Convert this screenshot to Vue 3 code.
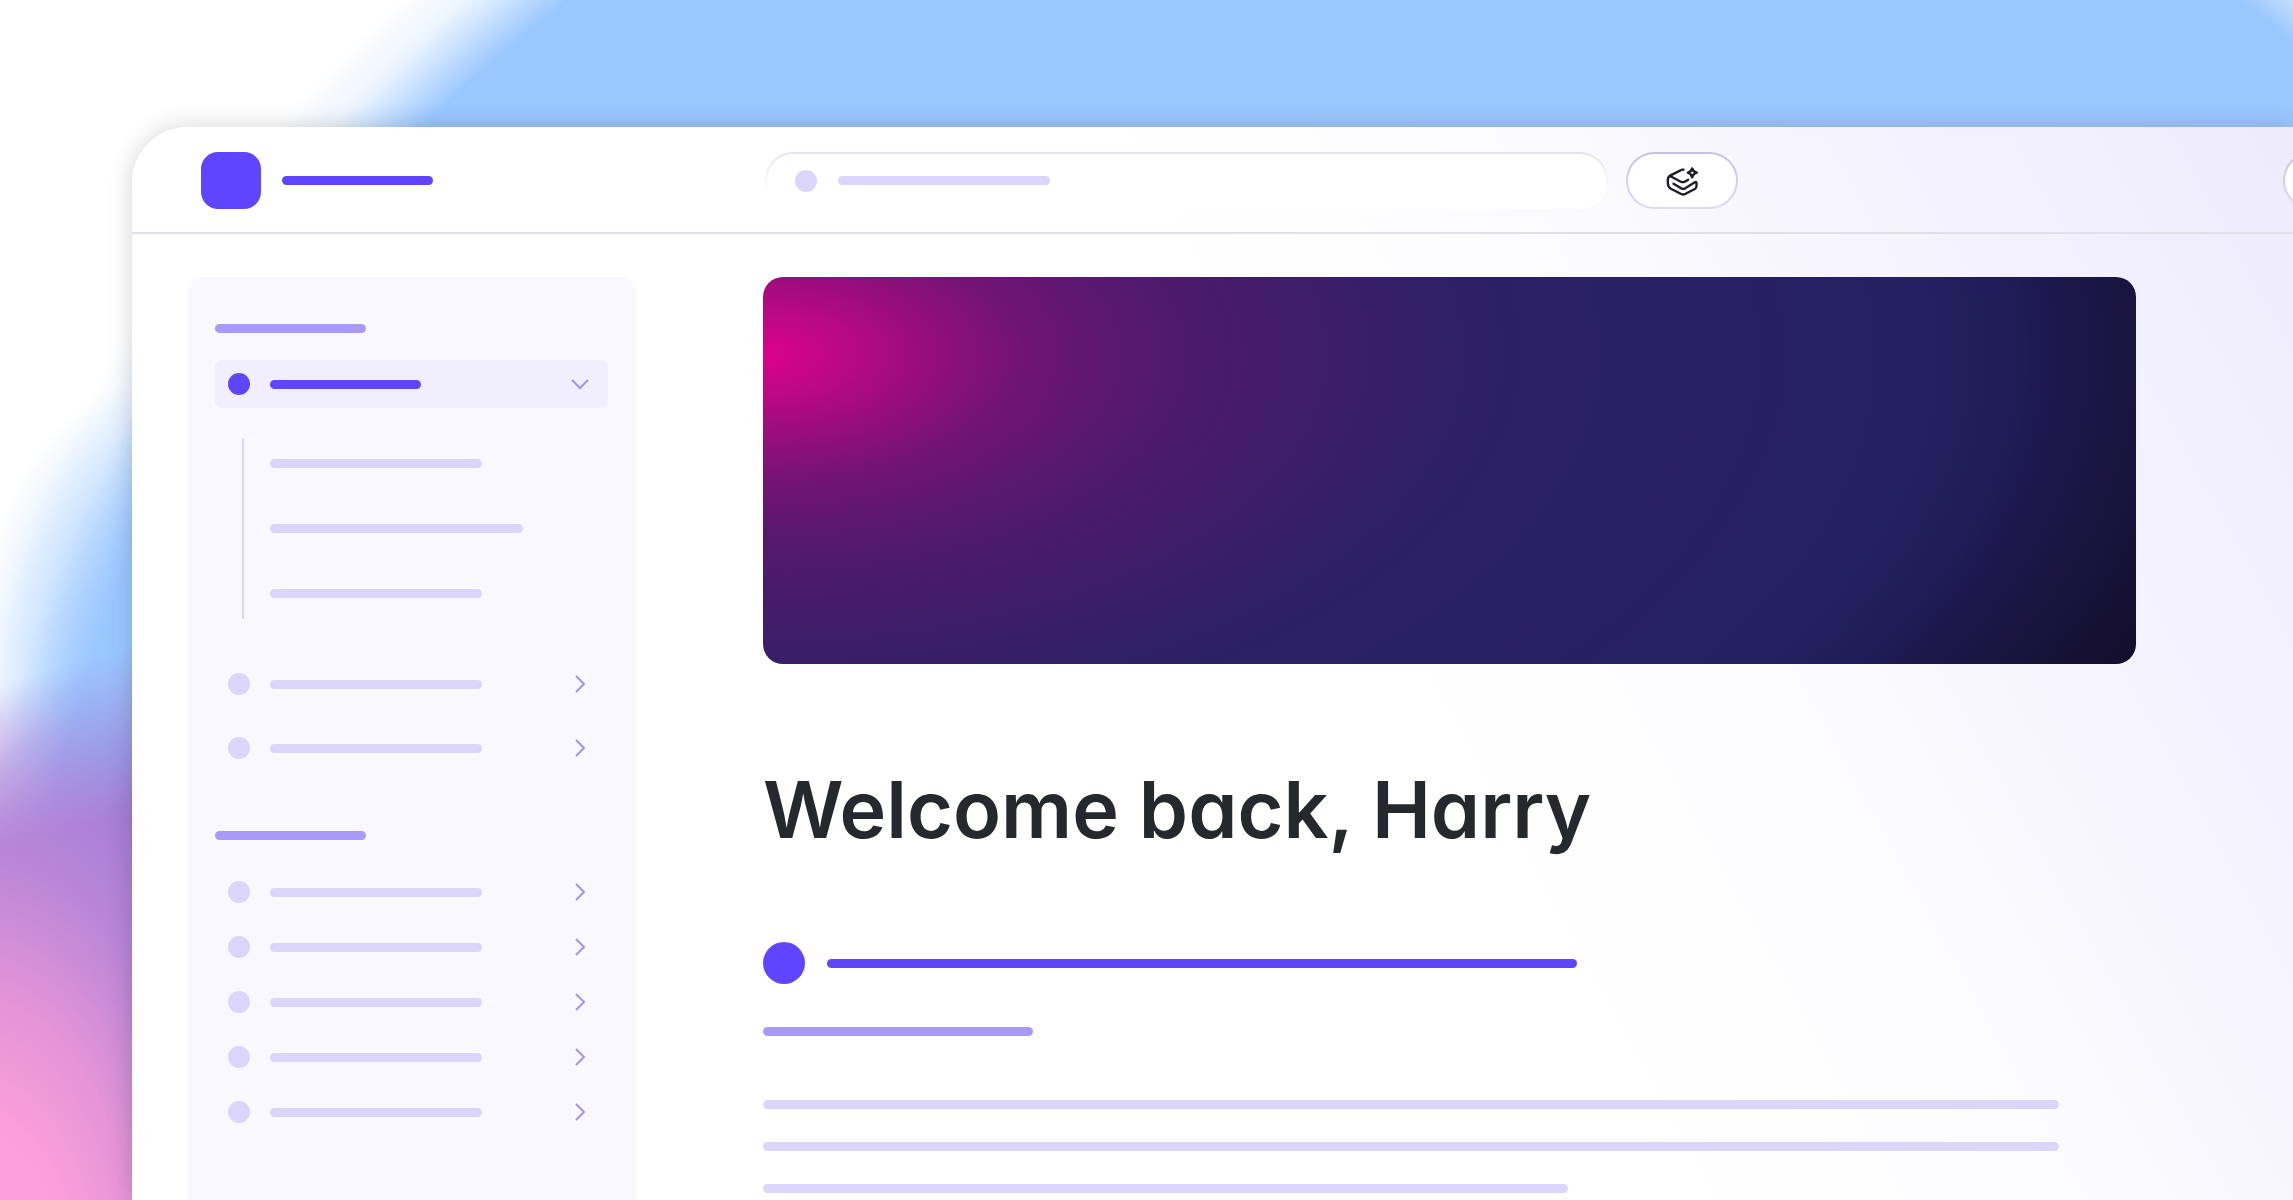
<script setup>
import { ref } from 'vue'

const open = ref(true)
const query = ref('')
const children = [212, 253, 212]
const library = [212, 212]
const workspace = [212, 212, 212, 212, 212]
const paragraph = ['94.4%', '94.4%', '58.6%']
</script>

<template>
  <div class="page">
    <div class="window">
      <header class="topbar">
        <a class="brand" href="#" aria-label="Home">
          <span class="logo"></span>
          <span class="line strong short"></span>
        </a>
        <label class="search">
          <span class="dot"></span>
          <span class="line hint"></span>
          <input v-model="query" type="search" aria-label="Search" />
        </label>
        <button class="pill" type="button" aria-label="Assistant">
          <svg viewBox="314 130 104 96" width="35" height="32" fill="none" stroke="#1d1e22" stroke-width="7" stroke-linecap="round" stroke-linejoin="round">
            <path d="M369 144 Q365 143 360 146 L330 161 Q321 167 322 176 V184 Q322 196 331 201 L362 217 Q368 220 374 217 L403 202 Q408 199 408 194 V184 Q408 179 403 182 L374 200 Q368 203 362 200 L339 186" />
            <path d="M330 164 L361 180 Q367 183 373 180 L383 174" />
            <path d="M395 140 Q398 151 409 153 Q398 156 395 167 Q392 156 382 153 Q392 151 395 140 Z" />
          </svg>
        </button>
        <button class="pill account" type="button" aria-label="Account"></button>
      </header>

      <div class="body">
        <nav class="sidebar" aria-label="Main">
          <span class="line medium short"></span>
          <button class="row active" type="button" aria-label="Current section" :aria-expanded="open" @click="open = !open">
            <span class="dot strong"></span>
            <span class="line strong short"></span>
            <svg class="chevron" viewBox="0 0 20 20" width="20" height="20"><path d="M2 6 L10 14 L18 6" /></svg>
          </button>
          <ul v-if="open" class="children">
            <li v-for="(w, i) in children" :key="i">
              <a href="#" :aria-label="`Page ${i + 1}`"><span class="line" :style="{ width: w + 'px' }"></span></a>
            </li>
          </ul>
          <ul class="list loose">
            <li v-for="(w, i) in library" :key="i">
              <a class="row" href="#" :aria-label="`Section ${i + 1}`">
                <span class="dot"></span>
                <span class="line" :style="{ width: w + 'px' }"></span>
                <svg class="chevron" viewBox="0 0 20 20" width="20" height="20"><path d="M6 2 L14 10 L6 18" /></svg>
              </a>
            </li>
          </ul>
          <span class="line medium short"></span>
          <ul class="list">
            <li v-for="(w, i) in workspace" :key="i">
              <a class="row" href="#" :aria-label="`Space ${i + 1}`">
                <span class="dot"></span>
                <span class="line" :style="{ width: w + 'px' }"></span>
                <svg class="chevron" viewBox="0 0 20 20" width="20" height="20"><path d="M6 2 L14 10 L6 18" /></svg>
              </a>
            </li>
          </ul>
        </nav>

        <main class="content">
          <div class="banner"></div>
          <h1>Welcome back, Harry</h1>
          <div class="lead">
            <span class="avatar"></span>
            <span class="line strong"></span>
          </div>
          <span class="line medium sub"></span>
          <div class="paragraph">
            <span v-for="(w, i) in paragraph" :key="i" class="line" :style="{ width: w }"></span>
          </div>
        </main>
      </div>
    </div>
  </div>
</template>

<style>
body {
  margin: 0;
}
</style>

<style scoped>
.page {
  box-sizing: border-box;
  height: 100vh;
  padding: 127px 0 0 132px;
  overflow: hidden;
  display: flex;
  font-family: Inter, "Liberation Sans", sans-serif;
  background:
    radial-gradient(320px 640px at -20px 1330px, #ff9fda 30%, #f79bd8c8 52%, #e596d868 74%, #d08ed800 100%),
    linear-gradient(165deg, #9d7bd600 660px, #9d7bd680 740px, #9d7bd6 820px) 0 0 / 260px 100% no-repeat,
    radial-gradient(180px 260px at 160px 640px, #9bc7ff, #9bc7ff00),
    radial-gradient(circle at 1405px 1105px, #9bc7ff 1385px, #c8e0ff 1420px, #ecf5ff 1450px, #fff 1495px);
}

.window {
  flex: 1;
  min-width: 0;
  display: flex;
  flex-direction: column;
  overflow: hidden;
  border-top-left-radius: 56px;
  background: linear-gradient(61deg, #fff 55%, #fdfdff 67%, #f8f7fe 78%, #f4f2fe 86%, #eeebfd 100%);
  box-shadow: 0 0 24px rgba(0, 0, 0, 0.17);
}

.topbar {
  flex: none;
  display: flex;
  align-items: center;
  box-sizing: border-box;
  height: 107px;
  padding: 2px 0 0 69px;
  border-bottom: 2px solid #e0e0e7;
}

.brand {
  display: flex;
  align-items: center;
  flex: none;
  gap: 21px;
  width: 564px;
}

.logo {
  width: 60px;
  height: 57px;
  border-radius: 17px;
  background: #5f45ff;
}

.line {
  display: block;
  flex: none;
  height: 9px;
  max-width: 100%;
  border-radius: 5px;
  background: #dbd5fc;
}

.line.medium {
  background: #a999fb;
}

.line.strong,
.dot.strong {
  background: #5f45ff;
}

.line.short {
  width: 151px;
}

.dot {
  flex: none;
  width: 22px;
  height: 22px;
  border-radius: 50%;
  background: #dbd5fc;
}

.search {
  flex: 0 1 843px;
  display: flex;
  align-items: center;
  gap: 21px;
  box-sizing: border-box;
  height: 57px;
  padding: 0 28px;
  border: 2px solid transparent;
  border-radius: 28px;
  background:
    linear-gradient(#fff, #fff) padding-box,
    linear-gradient(#e4e3e9, #fff 70%) border-box;
}

.search .hint {
  width: 212px;
}

.search input {
  flex: 1;
  min-width: 0;
  border: 0;
  outline: 0;
  background: none;
  font: 400 20px Inter, "Liberation Sans", sans-serif;
}

.pill {
  flex: none;
  display: flex;
  align-items: center;
  justify-content: center;
  box-sizing: border-box;
  width: 112px;
  height: 57px;
  margin-left: 18px;
  padding: 0;
  border: 2px solid transparent;
  border-radius: 29px;
  background:
    linear-gradient(#fff, #fff) padding-box,
    linear-gradient(#c8c2e4, #dedaf6) border-box;
}

.pill.account {
  margin-left: auto;
  margin-right: -102px;
}

.body {
  flex: 1;
  display: flex;
  align-items: stretch;
  padding: 43px 157px 0 56px;
}

.sidebar {
  flex: none;
  box-sizing: border-box;
  width: 448px;
  padding: 47px 28px 47px 27px;
  border-radius: 14px 14px 0 0;
  background: #f9f8ff;
}

.row {
  display: flex;
  align-items: center;
  gap: 20px;
  box-sizing: border-box;
  width: 100%;
  height: 48px;
  padding: 0 18px 0 13px;
  border: 0;
  border-radius: 6px;
  background: none;
}

.row.active {
  margin-top: 27px;
  background: #f1eefe;
}

.chevron {
  margin-left: auto;
  fill: none;
  stroke: #a594ee;
  stroke-width: 2;
}

.children,
.list {
  margin: 0;
  padding: 0;
  list-style: none;
}

.children {
  display: flex;
  flex-direction: column;
  justify-content: space-between;
  box-sizing: border-box;
  height: 181px;
  margin: 30px 0 41px 27px;
  padding: 21px 0 21px 26px;
  border-left: 2px solid #dbd5fc;
}

.list {
  display: flex;
  flex-direction: column;
  gap: 7px;
  margin-top: 28px;
}

.list.loose {
  gap: 16px;
  margin: 0 0 59px;
}

.content {
  flex: 1;
  min-width: 0;
  padding-left: 127px;
}

.banner {
  height: 387px;
  border-radius: 20px;
  background: radial-gradient(1172px 598px at 0 20%, #db008c 0, #c00884 6%, #960d7c 14%, #741473 21%, #5c1770 29%, #4c1b6a 37%, #421d67 45%, #371f66 52%, #2c2064 63%, #262163 89%, #242161 100%, #1f1c59 106%, #1a1645 114%, #130e2a 128%);
}

h1 {
  margin: 97px 0 84px;
  color: #25282c;
  font-size: 79px;
  font-weight: 600;
  line-height: 97px;
  font-feature-settings: "cv11";
  white-space: nowrap;
}

.lead {
  display: flex;
  align-items: center;
  gap: 22px;
}

.lead .line {
  width: 750px;
}

.avatar {
  flex: none;
  width: 42px;
  height: 42px;
  border-radius: 50%;
  background: #5f45ff;
}

.line.sub {
  width: 270px;
  margin: 43px 0 64px;
}

.paragraph {
  display: flex;
  flex-direction: column;
  gap: 33px;
}
</style>
